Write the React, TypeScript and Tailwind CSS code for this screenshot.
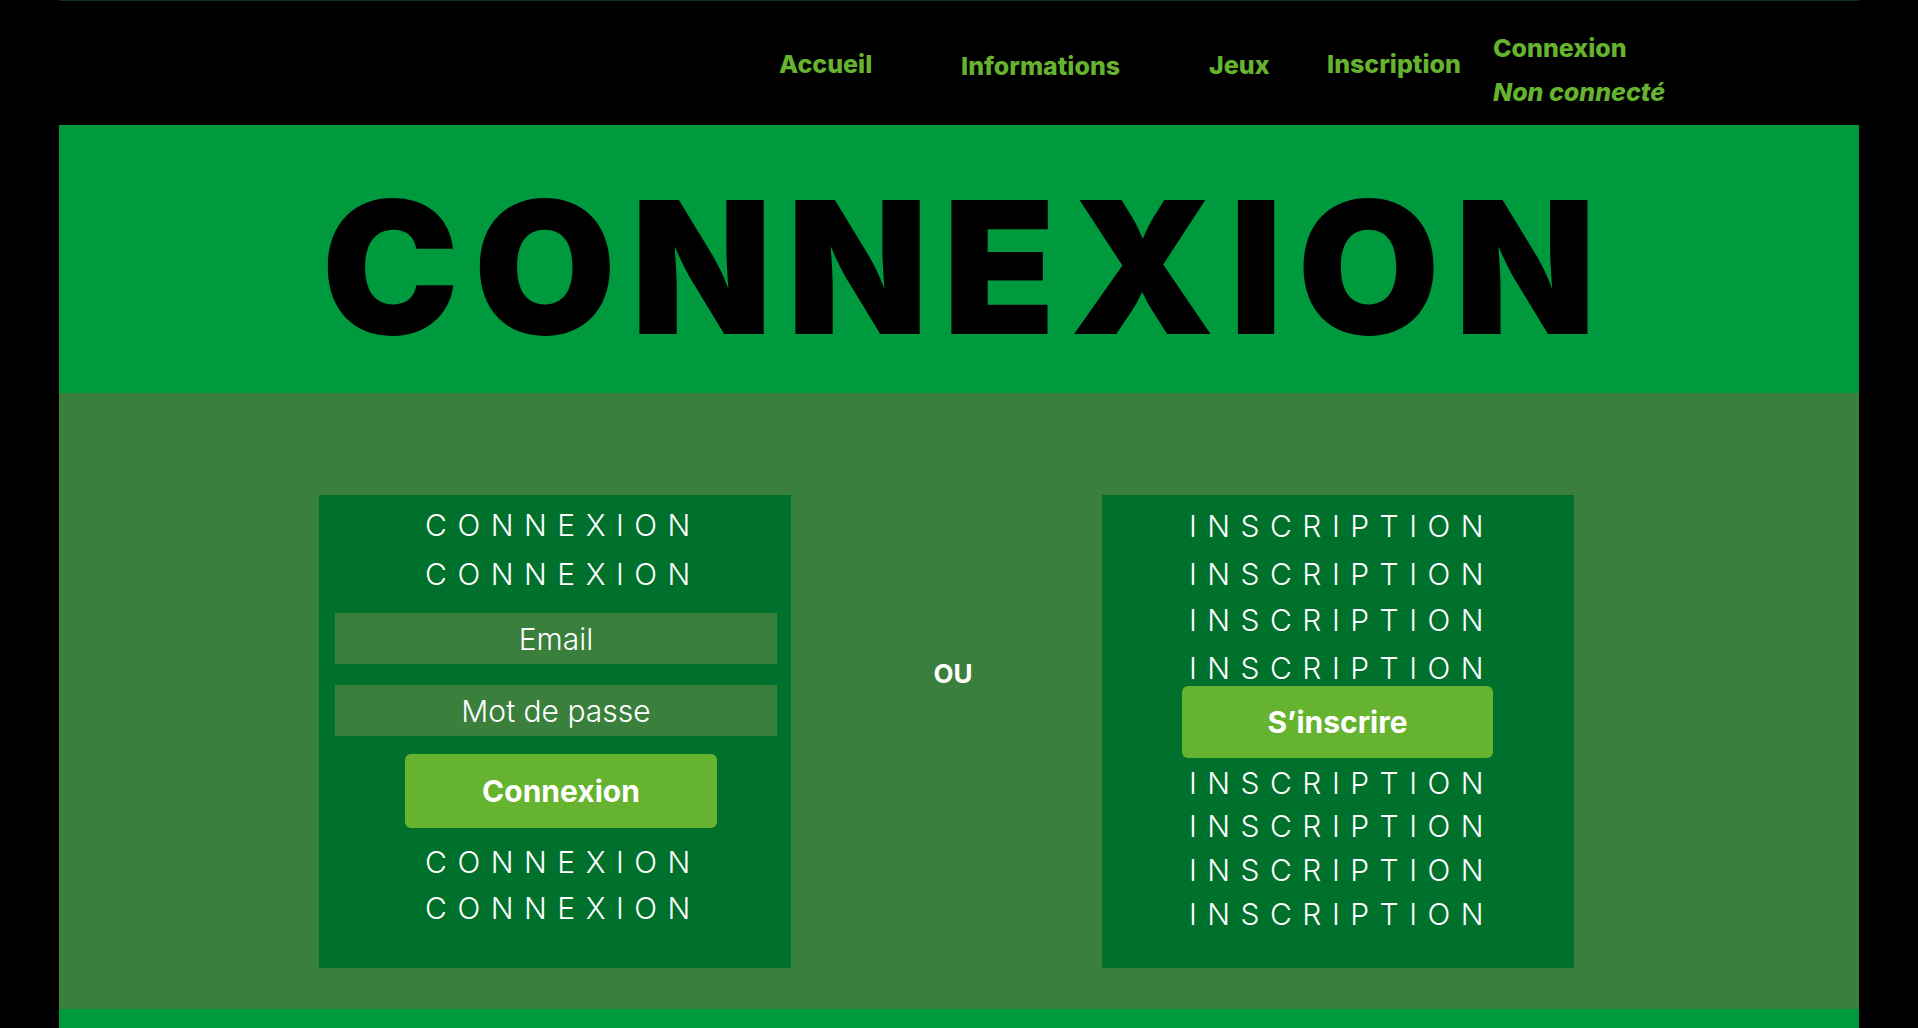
import React from 'react';

const NAV = [
  { label: 'Accueil', box: 'w-[182px] mt-[49px]' },
  { label: 'Informations', box: 'w-[248px] mt-[51px]' },
  { label: 'Jeux', box: 'w-[118px] mt-[50px]' },
  { label: 'Inscription', box: 'w-[166px] mt-[49px]' },
];

// spaced-out filler line used inside both cards
const Spaced = ({ text, className = '' }: { text: string; className?: string }) => (
  <div className={`text-[30px] font-light leading-9 tracking-[10.5px] text-white text-center ${className}`}>
    {text}
  </div>
);

const App: React.FC = () => {
  return (
    <div className="min-h-screen bg-black font-['Inter','Noto_Sans',sans-serif]">
      <div className="mx-auto w-[1800px]">
        {/* HEADER */}
        <header className="flex h-[125px] border-t border-[#06361a] bg-black pl-[720px]">
          {NAV.map((n) => (
            <a key={n.label} href="#" className={`${n.box} text-[25px] font-extrabold leading-[29px] text-[#65b32e]`}>
              {n.label}
            </a>
          ))}
          <div className="mt-[33px] flex flex-col gap-[15px] text-[25px] font-extrabold leading-[29px] text-[#65b32e]">
            <a href="#">Connexion</a>
            <span className="italic">Non connecté</span>
          </div>
        </header>

        {/* TITLE */}
        <section className="h-[268px] bg-[#009a3e] pt-[50px] text-center">
          <h1 className="pl-[14px] text-[184px] font-black leading-none tracking-[14.5px] text-black">CONNEXION</h1>
        </section>

        {/* FORMS */}
        <section className="flex h-[616px] bg-[#3a7f3c] pl-[260px] pt-[102px]">
          <div className="flex h-[473px] w-[472px] flex-col bg-[#00702d] pt-[12px]">
            <Spaced text="CONNEXION" className="pl-[16px]" />
            <Spaced text="CONNEXION" className="mt-[13px] pl-[16px]" />
            <input
              placeholder="Email"
              className="ml-[16px] mr-[14px] mt-[21px] h-[51px] bg-[#3a7f3c] text-center text-[30px] font-light text-white outline-none placeholder:text-white"
            />
            <input
              type="password"
              placeholder="Mot de passe"
              className="ml-[16px] mr-[14px] mt-[21px] h-[51px] bg-[#3a7f3c] text-center text-[30px] font-light text-white outline-none placeholder:text-white"
            />
            <button className="ml-[86px] mt-[18px] h-[74px] w-[312px] rounded-md bg-[#65b32e] text-[30px] font-bold text-white">
              Connexion
            </button>
            <Spaced text="CONNEXION" className="mt-[16px] pl-[16px]" />
            <Spaced text="CONNEXION" className="mt-[10px] pl-[16px]" />
          </div>

          <div className="flex w-[311px] justify-center">
            <span className="ml-[13px] mt-[163px] text-[26px] font-bold leading-8 text-white">OU</span>
          </div>

          <div className="flex h-[473px] w-[472px] flex-col bg-[#00702d] pt-[13px]">
            <Spaced text="INSCRIPTION" className="pl-[7px]" />
            <Spaced text="INSCRIPTION" className="mt-3 pl-[7px]" />
            <Spaced text="INSCRIPTION" className="mt-[10px] pl-[7px]" />
            <Spaced text="INSCRIPTION" className="mt-3 pl-[7px]" />
            <button className="ml-[80px] h-[72px] w-[311px] rounded-md bg-[#65b32e] text-[30px] font-bold text-white">
              S’inscrire
            </button>
            <Spaced text="INSCRIPTION" className="mt-[7px] pl-[7px]" />
            <Spaced text="INSCRIPTION" className="mt-[7px] pl-[7px]" />
            <Spaced text="INSCRIPTION" className="mt-2 pl-[7px]" />
            <Spaced text="INSCRIPTION" className="mt-2 pl-[7px]" />
          </div>
        </section>

        <footer className="h-[19px] bg-[#009a3e]" />
      </div>
    </div>
  );
};

export default App;
